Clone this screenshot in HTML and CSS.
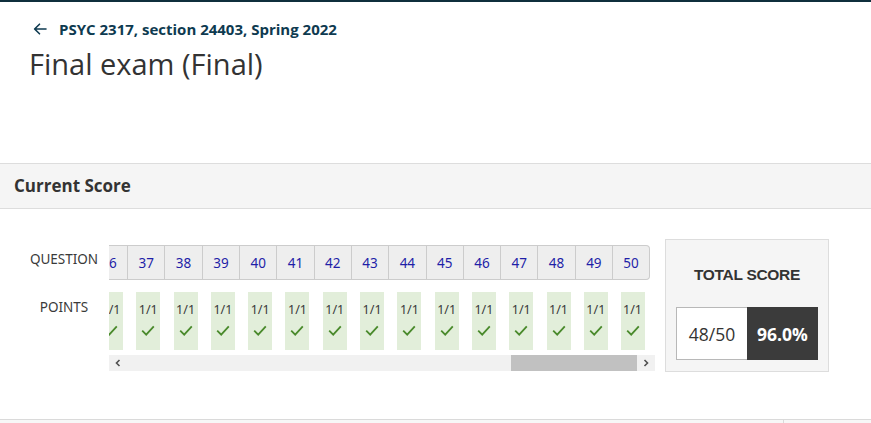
FILE: index.html
```html
<!DOCTYPE html>
<html lang="en">
<head>
<meta charset="utf-8">
<title>Final exam (Final)</title>
<link rel="stylesheet" href="styles.css">
</head>
<body>
<div class="page">
  <header class="page-header">
    <a class="back-link" href="#">
      <svg class="back-arrow" width="14" height="12" viewBox="0 0 14 12" aria-hidden="true">
        <path d="M13 6H1.8M6.5 1.2L1.6 6l4.9 4.8" fill="none" stroke="#0e3a50" stroke-width="1.6" stroke-linecap="round" stroke-linejoin="round"/>
      </svg>
      <span>PSYC 2317, section 24403, Spring 2022</span>
    </a>
    <h1 class="page-title">Final exam (Final)</h1>
  </header>

  <section class="score-section">
    <h2 class="section-title">Current Score</h2>
    <div class="score-body">
      <div class="score-table">
        <div class="row-labels">
          <div class="label label-question">QUESTION</div>
          <div class="label label-points">POINTS</div>
        </div>
        <div class="scroll-area">
          <div class="clip">
            <div class="q-row">
              <div class="q-cell">36</div>
              <div class="q-cell">37</div>
              <div class="q-cell">38</div>
              <div class="q-cell">39</div>
              <div class="q-cell">40</div>
              <div class="q-cell">41</div>
              <div class="q-cell">42</div>
              <div class="q-cell">43</div>
              <div class="q-cell">44</div>
              <div class="q-cell">45</div>
              <div class="q-cell">46</div>
              <div class="q-cell">47</div>
              <div class="q-cell">48</div>
              <div class="q-cell">49</div>
              <div class="q-cell q-last">50</div>
            </div>
          </div>
          <div class="clip">
            <div class="p-row">
              <div class="p-cell"><div class="p-box"><span>1/1</span><svg class="check" viewBox="0 0 14 11"><path d="M1.2 5.6l4 4L12.8 1.4" fill="none" stroke="#4a8a2c" stroke-width="1.8"/></svg></div></div>
              <div class="p-cell"><div class="p-box"><span>1/1</span><svg class="check" viewBox="0 0 14 11"><path d="M1.2 5.6l4 4L12.8 1.4" fill="none" stroke="#4a8a2c" stroke-width="1.8"/></svg></div></div>
              <div class="p-cell"><div class="p-box"><span>1/1</span><svg class="check" viewBox="0 0 14 11"><path d="M1.2 5.6l4 4L12.8 1.4" fill="none" stroke="#4a8a2c" stroke-width="1.8"/></svg></div></div>
              <div class="p-cell"><div class="p-box"><span>1/1</span><svg class="check" viewBox="0 0 14 11"><path d="M1.2 5.6l4 4L12.8 1.4" fill="none" stroke="#4a8a2c" stroke-width="1.8"/></svg></div></div>
              <div class="p-cell"><div class="p-box"><span>1/1</span><svg class="check" viewBox="0 0 14 11"><path d="M1.2 5.6l4 4L12.8 1.4" fill="none" stroke="#4a8a2c" stroke-width="1.8"/></svg></div></div>
              <div class="p-cell"><div class="p-box"><span>1/1</span><svg class="check" viewBox="0 0 14 11"><path d="M1.2 5.6l4 4L12.8 1.4" fill="none" stroke="#4a8a2c" stroke-width="1.8"/></svg></div></div>
              <div class="p-cell"><div class="p-box"><span>1/1</span><svg class="check" viewBox="0 0 14 11"><path d="M1.2 5.6l4 4L12.8 1.4" fill="none" stroke="#4a8a2c" stroke-width="1.8"/></svg></div></div>
              <div class="p-cell"><div class="p-box"><span>1/1</span><svg class="check" viewBox="0 0 14 11"><path d="M1.2 5.6l4 4L12.8 1.4" fill="none" stroke="#4a8a2c" stroke-width="1.8"/></svg></div></div>
              <div class="p-cell"><div class="p-box"><span>1/1</span><svg class="check" viewBox="0 0 14 11"><path d="M1.2 5.6l4 4L12.8 1.4" fill="none" stroke="#4a8a2c" stroke-width="1.8"/></svg></div></div>
              <div class="p-cell"><div class="p-box"><span>1/1</span><svg class="check" viewBox="0 0 14 11"><path d="M1.2 5.6l4 4L12.8 1.4" fill="none" stroke="#4a8a2c" stroke-width="1.8"/></svg></div></div>
              <div class="p-cell"><div class="p-box"><span>1/1</span><svg class="check" viewBox="0 0 14 11"><path d="M1.2 5.6l4 4L12.8 1.4" fill="none" stroke="#4a8a2c" stroke-width="1.8"/></svg></div></div>
              <div class="p-cell"><div class="p-box"><span>1/1</span><svg class="check" viewBox="0 0 14 11"><path d="M1.2 5.6l4 4L12.8 1.4" fill="none" stroke="#4a8a2c" stroke-width="1.8"/></svg></div></div>
              <div class="p-cell"><div class="p-box"><span>1/1</span><svg class="check" viewBox="0 0 14 11"><path d="M1.2 5.6l4 4L12.8 1.4" fill="none" stroke="#4a8a2c" stroke-width="1.8"/></svg></div></div>
              <div class="p-cell"><div class="p-box"><span>1/1</span><svg class="check" viewBox="0 0 14 11"><path d="M1.2 5.6l4 4L12.8 1.4" fill="none" stroke="#4a8a2c" stroke-width="1.8"/></svg></div></div>
              <div class="p-cell"><div class="p-box"><span>1/1</span><svg class="check" viewBox="0 0 14 11"><path d="M1.2 5.6l4 4L12.8 1.4" fill="none" stroke="#4a8a2c" stroke-width="1.8"/></svg></div></div>
            </div>
          </div>
          <div class="scrollbar">
            <div class="sb-arrow sb-left">
              <svg width="6" height="8" viewBox="0 0 6 8"><path d="M4.5 1L1.5 4l3 3" fill="none" stroke="#505050" stroke-width="1.6"/></svg>
            </div>
            <div class="sb-track"><div class="sb-thumb"></div></div>
            <div class="sb-arrow sb-right">
              <svg width="6" height="8" viewBox="0 0 6 8"><path d="M1.5 1l3 3-3 3" fill="none" stroke="#505050" stroke-width="1.6"/></svg>
            </div>
          </div>
        </div>
      </div>

      <div class="total-box">
        <div class="total-title">TOTAL SCORE</div>
        <div class="total-values">
          <div class="total-points">48/50</div>
          <div class="total-percent">96.0%</div>
        </div>
      </div>
    </div>
  </section>

  <div class="next-section">
    <div class="next-main"></div>
    <div class="next-side"></div>
  </div>
</div>
</body>
</html>
```

FILE: styles.css
```css
* { box-sizing: border-box; }

html, body {
  margin: 0;
  padding: 0;
  background: #ffffff;
}

body {
  font-family: "Open Sans", "Noto Sans", sans-serif;
  color: #333333;
}

.page {
  border-top: 2px solid #0f2f3c;
  height: 423px;
  overflow: hidden;
}

.page-header {
  padding: 17px 0 0 29px;
  height: 161px;
}

.back-link {
  display: flex;
  align-items: center;
  gap: 12px;
  text-decoration: none;
  color: #0e3a50;
  font-weight: 700;
  font-size: 15px;
  line-height: 20px;
  padding-left: 4px;
}

.back-arrow { display: block; }

.page-title {
  margin: 5px 0 0 0;
  font-weight: 400;
  font-size: 29px;
  line-height: 40px;
  color: #333333;
}

.score-section {
  border-top: 1px solid #dddddd;
}

.section-title {
  margin: 0;
  height: 45px;
  padding: 0 14px;
  background: #f5f5f5;
  border-bottom: 1px solid #dddddd;
  font-size: 17px;
  font-weight: 700;
  line-height: 44px;
  color: #333333;
}

.score-body {
  display: flex;
  align-items: flex-start;
  padding: 30px 0 0 19px;
  height: 210px;
}

.score-table {
  display: flex;
  margin-top: 6px;
}

.row-labels {
  width: 90px;
  display: flex;
  flex-direction: column;
  font-family: "Noto Sans", "Open Sans", sans-serif;
  font-size: 13.5px;
  line-height: 16px;
  color: #3a3a3a;
  text-align: center;
}

.label-question {
  height: 47px;
  padding-top: 6px;
}

.label-points {
  padding-top: 7px;
}

.scroll-area {
  width: 546px;
}

.clip {
  overflow: hidden;
  display: flex;
  justify-content: flex-end;
  padding-right: 5px;
}

.q-row {
  display: flex;
  flex-shrink: 0;
  height: 35px;
  background: #eeeeee;
  border: 1px solid #cccccc;
  border-left: none;
  border-radius: 0 4px 4px 0;
}

.q-cell {
  width: 37.3px;
  flex-shrink: 0;
  border-right: 1px solid #cccccc;
  text-align: center;
  font-family: "Noto Sans", "Open Sans", sans-serif;
  font-size: 13.5px;
  line-height: 33px;
  padding-top: 1px;
  color: #1f1fa8;
}

.q-last { border-right: none; width: 36px; }

.p-row {
  display: flex;
  flex-shrink: 0;
  margin-top: 12px;
}

.p-cell {
  width: 37.3px;
  flex-shrink: 0;
  display: flex;
  justify-content: center;
  padding-left: 1px;
}

.p-row .p-cell:last-child { width: 36px; }

.p-box {
  width: 24px;
  height: 58px;
  background: #e2eeda;
  display: flex;
  flex-direction: column;
  align-items: center;
  padding-top: 10px;
}

.p-box span {
  font-family: "Noto Sans", "Open Sans", sans-serif;
  font-size: 12.5px;
  line-height: 16px;
  color: #3a3a3a;
}

.check {
  width: 14px;
  height: 11px;
  margin-top: 7px;
}

.scrollbar {
  display: flex;
  height: 16px;
  margin-top: 5px;
  background: #f1f1f1;
}

.sb-arrow {
  width: 18px;
  display: flex;
  align-items: center;
  justify-content: center;
}

.sb-left { justify-content: flex-start; padding-left: 6px; }

.sb-track {
  flex: 1;
  display: flex;
  justify-content: flex-end;
}

.sb-thumb {
  width: 126px;
  background: #c1c1c1;
}

.total-box {
  margin-left: 10px;
  width: 164px;
  height: 133px;
  background: #f5f5f5;
  border: 1px solid #dddddd;
  display: flex;
  flex-direction: column;
  align-items: center;
}

.total-title {
  margin-top: 26px;
  font-family: "Liberation Sans", Arial, sans-serif;
  font-weight: 700;
  font-size: 15.5px;
  line-height: 18px;
  letter-spacing: -0.3px;
  color: #333333;
}

.total-values {
  display: flex;
  margin-top: 23px;
  height: 53px;
}

.total-points,
.total-percent {
  width: 71px;
  display: flex;
  align-items: center;
  justify-content: center;
  font-size: 17.5px;
}

.total-points {
  background: #ffffff;
  border: 1px solid #b8b8b8;
  border-right: none;
  color: #333333;
}

.total-percent {
  background: #3b3b3b;
  color: #ffffff;
  font-weight: 700;
}

.next-section {
  display: flex;
  border-top: 1px solid #dadada;
  margin-top: 0;
  height: 10px;
  background: #f7f7f7;
}

.next-main {
  width: 784px;
  border-right: 1px solid #dadada;
}

.next-side { flex: 1; }
```
